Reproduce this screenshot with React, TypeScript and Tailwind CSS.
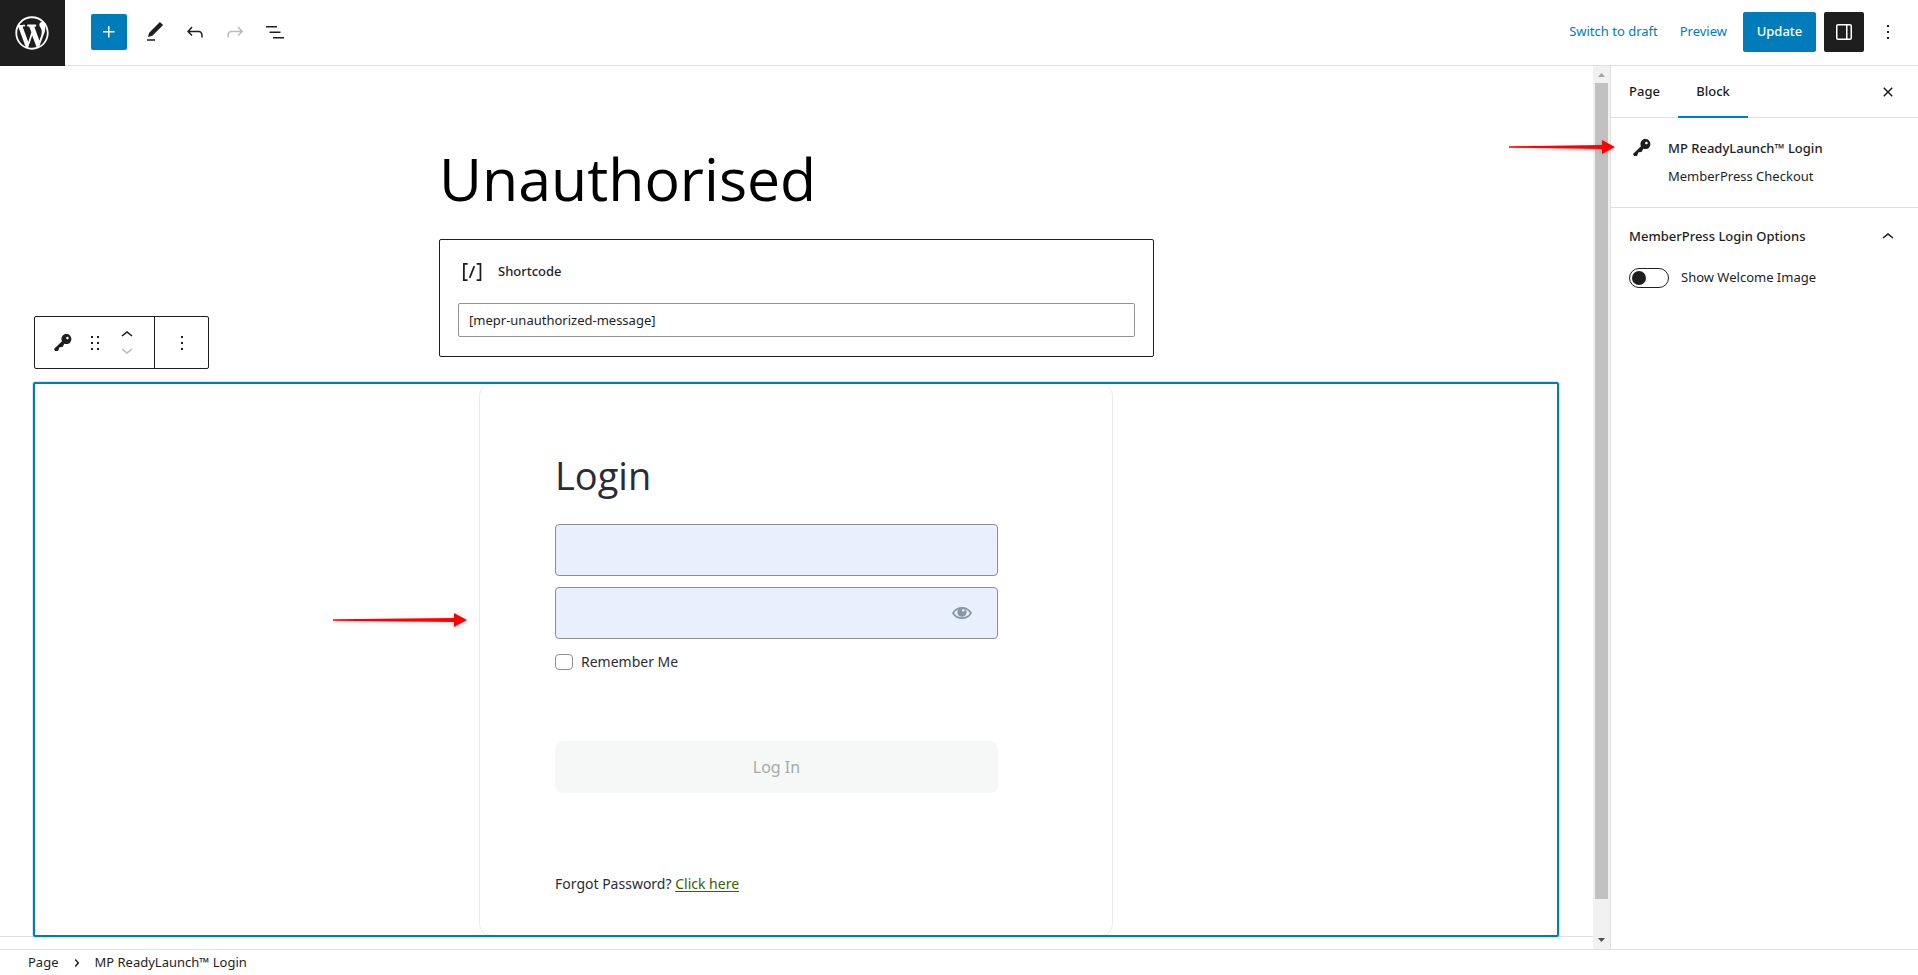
import React, { useState } from 'react';
import clsx from 'clsx';

// WordPress icon set, 24px grid
const icons = {
  plus: 'M11 12.5V17.5H12.5V12.5H17.5V11H12.5V6H11V11H6V12.5H11Z',
  edit: 'M20.1 5.1L16.9 2 6.2 12.7l-1.3 4.4 4.5-1.3L20.1 5.1zM4 20.8h8v-1.5H4v1.5z',
  undo: 'M18.3 11.7c-.6-.6-1.4-.9-2.3-.9H6.7l2.9-3.3-1.1-1-4.5 5L8.5 16l1-1-2.7-2.7H16c.5 0 .9.2 1.3.5 1 1 1 3.4 1 4.5v.3h1.5v-.2c0-1.5 0-4.3-1.5-5.7z',
  redo: 'M15.6 6.5l-1.1 1 2.9 3.3H8c-.9 0-1.7.3-2.3.9-1.4 1.5-1.4 4.2-1.4 5.6v.2h1.5v-.3c0-1.1 0-3.5 1-4.5.3-.3.7-.5 1.3-.5h9.2L14.5 15l1.1 1.1 4.6-4.6-4.6-5z',
  listView: 'M3 6h11v1.5H3V6Zm3.5 5.5h11V13h-11v-1.5ZM21 17H10v1.5h11V17Z',
  more: 'M13 19h-2v-2h2v2zm0-6h-2v-2h2v2zm0-6h-2V5h2v2z',
  drawer: 'M18 4H6c-1.1 0-2 .9-2 2v12c0 1.1.9 2 2 2h12c1.1 0 2-.9 2-2V6c0-1.1-.9-2-2-2zm-4 14.5H6c-.3 0-.5-.2-.5-.5V6c0-.3.2-.5.5-.5h8v13zm4.5-.5c0 .3-.2.5-.5.5h-2.5v-13H18c.3 0 .5.2.5.5v12z',
  close: 'M12 13.06l3.712 3.713 1.061-1.06L13.061 12l3.712-3.712-1.06-1.06L12 10.938 8.288 7.227l-1.061 1.06L10.939 12l-3.712 3.712 1.06 1.061L12 13.061z',
  chevronUp: 'M6.5 12.4L12 8l5.5 4.4-.9 1.2L12 10l-4.5 3.6-1-1.2z',
  chevronDown: 'M17.5 11.6L12 16l-5.5-4.4.9-1.2L12 14l4.5-3.6 1 1.2z',
  chevronRight: 'M10.8622 8.04053L14.2805 12.0286L10.8622 16.0167L9.72327 15.0405L12.3049 12.0286L9.72327 9.01672L10.8622 8.04053Z',
  drag: 'M8 7h2V5H8v2zm0 6h2v-2H8v2zm0 6h2v-2H8v2zm6-14v2h2V5h-2zm0 8h2v-2h-2v2zm0 6h2v-2h-2v2z',
  shortcode: 'M16 4.2v1.5h2.5v12.5H16v1.5h4V4.2h-4zM4.2 19.8h4v-1.5H5.8V5.8h2.5V4.2h-4l-.1 15.6zm5.1-3.1l1.4.6 4-10-1.4-.6-4 10z',
};

const Icon: React.FC<{ name: keyof typeof icons; className?: string }> = ({ name, className = 'size-6' }) => (
  <svg viewBox="0 0 24 24" className={clsx('shrink-0 fill-current', className)} aria-hidden="true">
    <path d={icons[name]} />
  </svg>
);

const WordPressLogo = () => (
  <svg viewBox="-2 -2 24 24" className="size-10 fill-white" aria-hidden="true">
    <path d="M20 10c0-5.51-4.49-10-10-10C4.48 0 0 4.49 0 10c0 5.52 4.48 10 10 10 5.51 0 10-4.48 10-10zM7.78 15.37L4.37 6.22c.55-.02 1.17-.08 1.17-.08.5-.06.44-1.13-.06-1.11 0 0-1.45.11-2.37.11-.18 0-.37 0-.58-.01C4.12 2.69 6.87 1.11 10 1.11c2.33 0 4.45.87 6.05 2.34-.68-.11-1.65.39-1.65 1.58 0 .74.45 1.36.9 2.1.35.61.55 1.36.55 2.46 0 1.49-1.4 5-1.4 5l-3.03-8.37c.54-.02.82-.17.82-.17.5-.05.44-1.25-.06-1.22 0 0-1.44.12-2.38.12-.87 0-2.33-.12-2.33-.12-.5-.03-.56 1.2-.06 1.22l.92.08 1.26 3.41zM17.41 10c.24-.64.74-1.87.43-4.25.7 1.29 1.05 2.71 1.05 4.25 0 3.29-1.73 6.24-4.4 7.78.97-2.59 1.94-5.2 2.92-7.78zM6.1 18.09C3.12 16.65 1.11 13.53 1.11 10c0-1.3.23-2.48.72-3.59C3.25 10.3 4.67 14.2 6.1 18.09zm4.03-6.63l2.58 6.98c-.86.29-1.76.45-2.71.45-.79 0-1.57-.11-2.29-.33.81-2.38 1.62-4.74 2.42-7.1z" />
  </svg>
);

const KeyIcon = () => (
  <svg viewBox="0 0 20 20" className="size-5 shrink-0 fill-current" aria-hidden="true">
    <path d="M16.95 2.58c1.96 1.95 1.96 5.12 0 7.07-1.51 1.51-3.75 1.84-5.59 1.01l-1.87 3.31-2.99.31L5 18H2l-1-2 7.95-7.69c-.92-1.87-.62-4.18.93-5.73 1.95-1.96 5.12-1.96 7.07 0zm-2.51 3.79c.74 0 1.33-.6 1.33-1.34 0-.73-.59-1.33-1.33-1.33-.73 0-1.33.6-1.33 1.33 0 .74.6 1.34 1.33 1.34z" />
  </svg>
);

const EyeIcon = () => (
  <svg viewBox="0 0 20 20" className="size-5" aria-hidden="true">
    <path d="M1 10c2-3.400 5.200-5.200 9-5.200s7 1.800 9 5.200c-2 3.400-5.200 5.200-9 5.200s-7-1.800-9-5.200z" fill="none" stroke="currentColor" strokeWidth="1.700" />
    <circle cx="10" cy="9.200" r="4.600" fill="currentColor" />
    <circle cx="11.300" cy="7.200" r="1.300" fill="#e8f0fe" />
  </svg>
);

// Red annotation arrow
const Arrow: React.FC<{ className: string; length: number }> = ({ className, length }) => (
  <svg
    width={length}
    height="16"
    viewBox={`0 0 ${length} 16`}
    className={clsx('absolute z-10 overflow-visible drop-shadow-sm pointer-events-none', className)}
    aria-hidden="true"
  >
    <path d={`M0 7.300 L${length - 13} 6 V1 L${length} 8 L${length - 13} 15 V10 L0 8.700 Z`} fill="#ff0000" />
  </svg>
);

const Header = () => (
  <header className="flex h-[66px] shrink-0 items-stretch">
    <a href="#" aria-label="View pages" className="flex w-[65px] items-center justify-center bg-[#1e1e1e] pb-px pr-px">
      <WordPressLogo />
    </a>
    <div className="flex flex-1 items-center justify-between border-b border-[#e0e0e0] pb-px pl-[26px] pr-3.5">
      <div className="flex items-center gap-1">
        <button aria-label="Add block" className="mr-1.5 flex size-9 items-center justify-center rounded-xs bg-[#007cba] text-white">
          <Icon name="plus" />
        </button>
        <button aria-label="Tools" className="flex size-9 items-center justify-center">
          <Icon name="edit" />
        </button>
        <button aria-label="Undo" className="flex size-9 items-center justify-center">
          <Icon name="undo" />
        </button>
        <button aria-label="Redo" disabled className="flex size-9 items-center justify-center text-[#bbbbbb]">
          <Icon name="redo" />
        </button>
        <button aria-label="List view" className="flex size-9 items-center justify-center">
          <Icon name="listView" />
        </button>
      </div>

      <div className="flex items-center gap-2">
        <button className="mr-3.5 text-[#007cba]">Switch to draft</button>
        <button className="mr-2 text-[#007cba]">Preview</button>
        <button className="h-10 w-[73px] rounded-xs bg-[#007cba] font-medium text-white">Update</button>
        <button aria-label="Settings" className="flex size-10 items-center justify-center rounded-xs bg-[#1e1e1e] text-white">
          <Icon name="drawer" />
        </button>
        <button aria-label="Options" className="flex h-10 w-8 items-center justify-center">
          <Icon name="more" />
        </button>
      </div>
    </div>
  </header>
);

const BlockToolbar = () => (
  <div className="absolute bottom-full left-0 mb-3.5 flex h-[53px] w-[175px] rounded-xs border border-[#1e1e1e] bg-white">
    <div className="flex flex-1 items-center justify-center gap-2 border-r border-[#1e1e1e]">
      <button aria-label="MP ReadyLaunch Login" className="flex w-6 justify-center">
        <KeyIcon />
      </button>
      <button aria-label="Drag">
        <Icon name="drag" />
      </button>
      <div className="flex flex-col">
        <button aria-label="Move up">
          <Icon name="chevronUp" />
        </button>
        <button aria-label="Move down" disabled className="-mt-[9px] text-[#bbbbbb]">
          <Icon name="chevronDown" />
        </button>
      </div>
    </div>
    <button aria-label="Options" className="flex w-[53px] items-center justify-center">
      <Icon name="more" />
    </button>
  </div>
);

const LoginBlock = () => (
  <section className="relative ml-[34px] mr-[35px] after:pointer-events-none after:absolute after:-inset-px after:rounded-xs after:border-2 after:border-[#007cba] after:shadow-[0_0_0_1px_#d5e9f3]">
    <BlockToolbar />
    <div className="relative mx-auto w-[634px] max-w-full rounded-xl border border-[#ebebeb] px-[75px] pb-[39px] pt-[65px] text-[#2b2b37]">
      <Arrow className="right-full top-[228px] mr-[13px]" length={134} />
      <h2 className="font-['Open_Sans',sans-serif] text-[38px] leading-[52px]">Login</h2>
      <form className="w-[443px] max-w-full" onSubmit={(e) => e.preventDefault()}>
        <input
          type="text"
          aria-label="Username"
          className="mt-[23px] block h-[52px] w-full rounded-sm border border-[#8c8f94] bg-[#e8f0fe] px-3"
        />
        <div className="relative mt-[11px]">
          <input
            type="password"
            aria-label="Password"
            className="block h-[52px] w-full rounded-sm border border-[#8c8f94] bg-[#e8f0fe] px-3"
          />
          <button type="button" aria-label="Show password" className="absolute right-[26px] top-4 text-[#8797a8]">
            <EyeIcon />
          </button>
        </div>
        <label className="mt-[11px] flex items-center gap-2 text-[14px] leading-6">
          <input type="checkbox" className="h-4 w-[18px] appearance-none rounded-sm border border-[#8c8f94] bg-white" />
          Remember Me
        </label>
        <button disabled className="mt-[67px] block h-[52px] w-full rounded-lg bg-[#f6f8f7] text-[16px] text-[#a7aaad]">
          Log In
        </button>
      </form>
      <p className="mt-[79px] text-[14px] leading-6">
        Forgot Password?{' '}
        <a href="#" className="text-[#3a6200] underline underline-offset-2">
          Click here
        </a>
      </p>
    </div>
  </section>
);

const Scrollbar = () => (
  <div className="flex w-[17px] shrink-0 flex-col items-center bg-[#f1f1f1]" aria-hidden="true">
    <svg viewBox="0 0 17 17" className="size-[17px] fill-[#a3a3a3]">
      <path d="M5 11h7L8.500 7z" />
    </svg>
    <div className="w-[13px] flex-1 bg-[#c1c1c1]" />
    <svg viewBox="0 0 17 17" className="mt-[33px] size-[17px] fill-[#505050]">
      <path d="M5 6h7L8.500 10z" />
    </svg>
  </div>
);

const Sidebar = () => {
  const [welcomeImage, setWelcomeImage] = useState(false);

  return (
    <aside className="relative w-[308px] shrink-0 border-l border-[#e0e0e0]">
      <Arrow className="right-full top-[73px] -mr-1" length={106} />
      <div className="flex h-[52px] items-stretch border-b border-[#e0e0e0] font-medium">
        <button className="w-[67px]">Page</button>
        <button className="-mb-px w-[70px] border-b-2 border-[#007cba] pt-px">Block</button>
        <button aria-label="Close settings" className="ml-auto mr-[18px]">
          <Icon name="close" />
        </button>
      </div>

      <div className="flex h-[90px] gap-4 border-b border-[#e0e0e0] pl-[21px] pt-5">
        <KeyIcon />
        <div>
          <h2 className="leading-5 font-medium">MP ReadyLaunch™ Login</h2>
          <p className="mt-2 leading-5">MemberPress Checkout</p>
        </div>
      </div>

      <div className="px-[18px]">
        <button className="flex h-[58px] w-full items-center justify-between font-medium">
          MemberPress Login Options
          <Icon name="chevronUp" />
        </button>
        <label className="mt-0.5 flex items-center gap-3">
          <span className="relative flex h-5 w-10">
            <input
              type="checkbox"
              checked={welcomeImage}
              onChange={(e) => setWelcomeImage(e.target.checked)}
              className="peer h-5 w-10 appearance-none rounded-full border border-[#1e1e1e] bg-white"
            />
            <span className="absolute left-[3px] top-[3px] size-3.5 rounded-full bg-[#1e1e1e] peer-checked:left-[23px]" />
          </span>
          Show Welcome Image
        </label>
      </div>
    </aside>
  );
};

export default function App() {
  return (
    <div className="flex min-h-screen flex-col bg-white font-['Noto_Sans','Open_Sans',sans-serif] text-[13px] text-[#1e1e1e]">
      <Header />

      <div className="flex flex-1">
        <main className="min-w-0 flex-1">
          <div className="border-b border-[#e0e0e0]">
            <div className="mx-auto w-[715px] max-w-full pt-[70px]">
              <h1 className="font-['Open_Sans',sans-serif] text-[59px] leading-[84px] text-black">Unauthorised</h1>
              <div className="mb-[26px] mt-[19px] rounded-xs border border-[#1e1e1e] px-[18px] pb-[19px] pt-[18px]">
                <label htmlFor="shortcode" className="flex items-center gap-3 font-medium">
                  <Icon name="shortcode" className="size-7" />
                  Shortcode
                </label>
                <input
                  id="shortcode"
                  type="text"
                  defaultValue="[mepr-unauthorized-message]"
                  className="mt-[17px] block h-[34px] w-full rounded-xs border border-[#949494] px-2.5"
                />
              </div>
            </div>
            <LoginBlock />
          </div>
        </main>
        <Scrollbar />
        <Sidebar />
      </div>

      <footer className="flex h-[26px] shrink-0 items-center gap-1.5 border-t border-[#e0e0e0] pl-7">
        <button>Page</button>
        <Icon name="chevronRight" />
        <button>MP ReadyLaunch™ Login</button>
      </footer>
    </div>
  );
}
